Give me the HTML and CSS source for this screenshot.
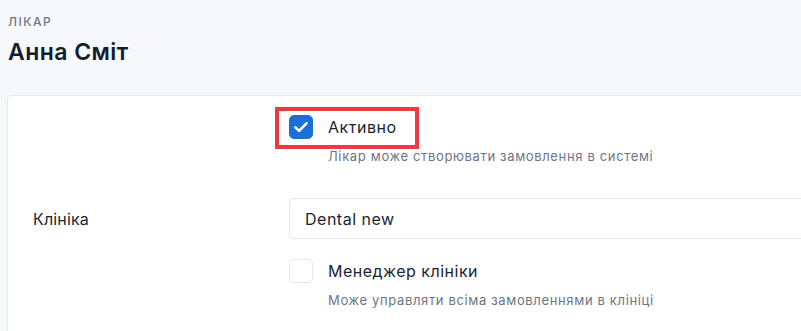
FILE: index.html
```html
<!DOCTYPE html>
<html lang="uk">
<head>
<meta charset="utf-8">
<title>Лікар — Анна Сміт</title>
<link rel="stylesheet" href="styles.css">
</head>
<body>
<div class="page">
  <header class="header">
    <div class="eyebrow">Лікар</div>
    <h1 class="name">Анна Сміт</h1>
  </header>
  <section class="card">
    <div class="row row-check">
      <div class="label"></div>
      <div class="control">
        <div class="check-item highlighted">
          <span class="box checked">
            <svg viewBox="0 0 24 24" width="24" height="24" aria-hidden="true"><path d="M6.5 12.4l3.6 3.5 7.4-7.6" fill="none" stroke="#fff" stroke-width="2.6" stroke-linecap="round" stroke-linejoin="round"/></svg>
          </span>
          <span class="check-label">Активно</span>
          <span class="highlight"></span>
        </div>
        <div class="hint">Лікар може створювати замовлення в системі</div>
      </div>
    </div>
    <div class="row row-input">
      <div class="label">Клініка</div>
      <div class="control">
        <div class="input">Dental new</div>
      </div>
    </div>
    <div class="row row-check2">
      <div class="label"></div>
      <div class="control">
        <div class="check-item">
          <span class="box"></span>
          <span class="check-label">Менеджер клініки</span>
        </div>
        <div class="hint">Може управляти всіма замовленнями в клініці</div>
      </div>
    </div>
  </section>
</div>
</body>
</html>
```

FILE: styles.css
```css
* { box-sizing: border-box; }
html, body { margin: 0; padding: 0; }
body {
  background: #f6f8fb;
  font-family: Inter, "Noto Sans", "Liberation Sans", sans-serif;
  color: #1b2433;
  overflow: hidden;
  width: 801px;
  height: 331px;
}
.page {
  padding: 15px 0 0 7px;
}
.header { padding-left: 1px; }
.eyebrow {
  font-size: 12px;
  line-height: 14px;
  font-weight: 500;
  letter-spacing: 1.5px;
  text-transform: uppercase;
  color: #6b7585;
}
.name {
  margin: 9px 0 0;
  font-size: 23px;
  line-height: 28px;
  font-weight: 600;
  letter-spacing: 0.45px;
  color: #141c2b;
}
.card {
  margin-top: 29px;
  background: #fff;
  border: 1px solid #e6e9ee;
  border-right: none;
  border-bottom: none;
  border-radius: 4px 0 0 0;
  padding: 19px 0 0 25px;
  height: 236px;
}
.row { display: flex; align-items: flex-start; }
.label {
  width: 256px;
  flex: none;
  font-size: 16px;
  letter-spacing: 0.15px;
  color: #1b2433;
}
.control { flex: 1; min-width: 0; }
.check-item {
  position: relative;
  display: flex;
  align-items: center;
  height: 24px;
}
.box {
  width: 24px;
  height: 24px;
  border-radius: 5px;
  border: 1px solid #e3e6ea;
  background: #fff;
  flex: none;
  display: flex;
}
.box.checked {
  background: #1b6fd6;
  border-color: #1b6fd6;
}
.box.checked svg { margin: -1px; }
.check-label {
  margin-left: 15px;
  font-size: 16px;
  letter-spacing: 0.5px;
  color: #1b2433;
}
.highlight {
  position: absolute;
  left: -14px;
  top: -8px;
  width: 144px;
  height: 42px;
  border: 4px solid #ec3a42;
  pointer-events: none;
}
.hint {
  margin: 8px 0 0 39px;
  font-size: 13px;
  line-height: 18px;
  color: #6b7585;
  letter-spacing: 0.65px;
}
.row-input {
  margin-top: 33px;
  align-items: center;
}
.input {
  height: 41px;
  border: 1px solid #e3e6ea;
  border-right: none;
  border-radius: 5px 0 0 5px;
  padding: 0 15px;
  display: flex;
  align-items: center;
  font-size: 16px;
  letter-spacing: 0.5px;
  color: #1b2433;
}
.row-check2 { margin-top: 20px; }
```
